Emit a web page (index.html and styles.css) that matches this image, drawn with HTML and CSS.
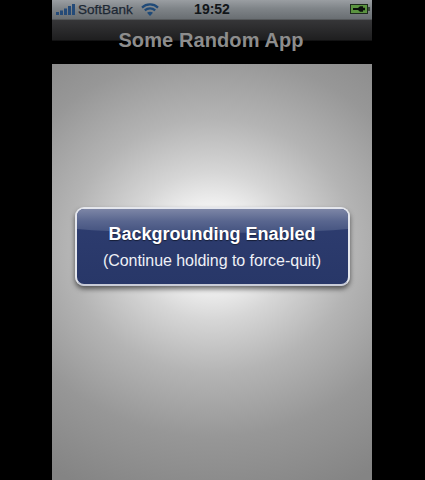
FILE: index.html
```html
<!DOCTYPE html>
<html lang="en">
<head>
<meta charset="utf-8">
<title>Some Random App</title>
<link rel="stylesheet" href="styles.css">
</head>
<body>
<div class="phone">
  <div class="status">
    <div class="status-left">
      <svg class="signal" width="20" height="11" viewBox="0 0 20 11"><rect x="0" y="8" width="3" height="3" /><rect x="4" y="6.5" width="3" height="4.5" /><rect x="8" y="4.5" width="3" height="6.5" /><rect x="12" y="2" width="3" height="9" /><rect x="16" y="0" width="3" height="11" /></svg>
      <span class="carrier">SoftBank</span>
      <svg class="wifi" width="18" height="13" viewBox="0 0 18 13" fill="none"><path d="M1 4.6C5.5 .4 12.5 .4 17 4.6" stroke="#1f4a78" stroke-width="2.2"/><path d="M3.8 7.4C6.8 4.6 11.2 4.6 14.2 7.4" stroke="#1f4a78" stroke-width="2.2"/><path d="M9 13L6 9.8C7.8 8.4 10.2 8.4 12 9.8Z" fill="#1f4a78"/></svg>
    </div>
    <span class="time">19:52</span>
    <svg class="battery" width="20" height="10" viewBox="0 0 20 10"><rect x="0" y="0" width="18" height="10" fill="#1c2a1c"/><rect x="1" y="1" width="16" height="8" fill="#5b9440"/><rect x="18" y="3" width="2" height="4" fill="#3a4a3a"/><path d="M3 4H8L10 2.2H13V3.8H15V6.2H13V7.8H10L8 6H3Z" fill="#0a100a"/></svg>
  </div>
  <div class="nav"><h1 class="title">Some Random App</h1></div>
  <main class="content">
    <div class="dialog">
      <div class="dialog-title">Backgrounding Enabled</div>
      <div class="dialog-sub">(Continue holding to force-quit)</div>
    </div>
  </main>
</div>
</body>
</html>
```
FILE: styles.css
```css
html, body { margin: 0; height: 100%; background: #000; overflow: hidden; }
body { font-family: "Liberation Sans", Arial, sans-serif; }
.phone { width: 320px; height: 480px; margin-left: 52px; display: flex; flex-direction: column; background: #000; }
.status { height: 20px; flex: none; display: flex; align-items: center; justify-content: space-between; position: relative; padding: 0 3px 1px 4px; box-sizing: border-box; background: linear-gradient(#9a9ea2 0, #7f8488 45%, #696e72 100%); border-bottom: 1px solid #55585a; }
.status-left { display: flex; align-items: center; }
.signal { fill: #244a78; margin-right: 2px; }
.carrier { font-size: 13.5px; color: #1c2733; -webkit-text-stroke: .25px #1c2733; margin-right: 8px; }
.wifi { display: block; }
.time { position: absolute; left: 0; right: 0; text-align: center; font-size: 14px; font-weight: bold; color: #111619; }
.battery { display: block; margin-right: -1px; }
.nav { height: 42px; flex: none; display: flex; justify-content: center; align-items: center; background: linear-gradient(#363638 0, #1e1e1f 48%, #000 50%, #000 100%); box-sizing: border-box; padding: 0 2px 2px 0; }
.title { margin: 0; font-size: 20px; line-height: 24px; font-weight: bold; color: #8d8d8d; letter-spacing: .1px; }
.content { flex: 1; margin-top: 2px; display: flex; justify-content: center; align-items: flex-start; background: radial-gradient(ellipse 300px 265px at 160px 182px, #fcfcfc 0, #f4f4f4 14%, #d6d6d6 28%, #b4b4b4 48%, #979797 72%, #848484 100%); }
.dialog { position: relative; overflow: hidden; margin-top: 143px; width: 271px; height: 75px; box-sizing: content-box; border: 2px solid #e4e6ec; border-bottom-color: #c9ccd8; border-radius: 9px; background: linear-gradient(#2e3d70, #283768); color: #fff; text-align: center; box-shadow: 0 3px 5px rgba(0, 0, 0, .55); display: flex; flex-direction: column; align-items: center; }
.dialog::before { content: ""; position: absolute; left: -20px; right: -20px; top: -60px; height: 84px; border-radius: 0 0 50% 50% / 0 0 8px 8px; background: linear-gradient(#7d86a6 60px, #59668f 72px, #43527f 84px); }
.dialog-title, .dialog-sub { position: relative; }
.dialog-title { font-size: 18px; line-height: 20px; font-weight: bold; margin-top: 15px; text-shadow: 0 1px 1px rgba(0, 0, 0, .5); }
.dialog-sub { font-size: 16px; line-height: 18px; margin-top: 8px; letter-spacing: -.05px; color: #eef0f6; }
```
